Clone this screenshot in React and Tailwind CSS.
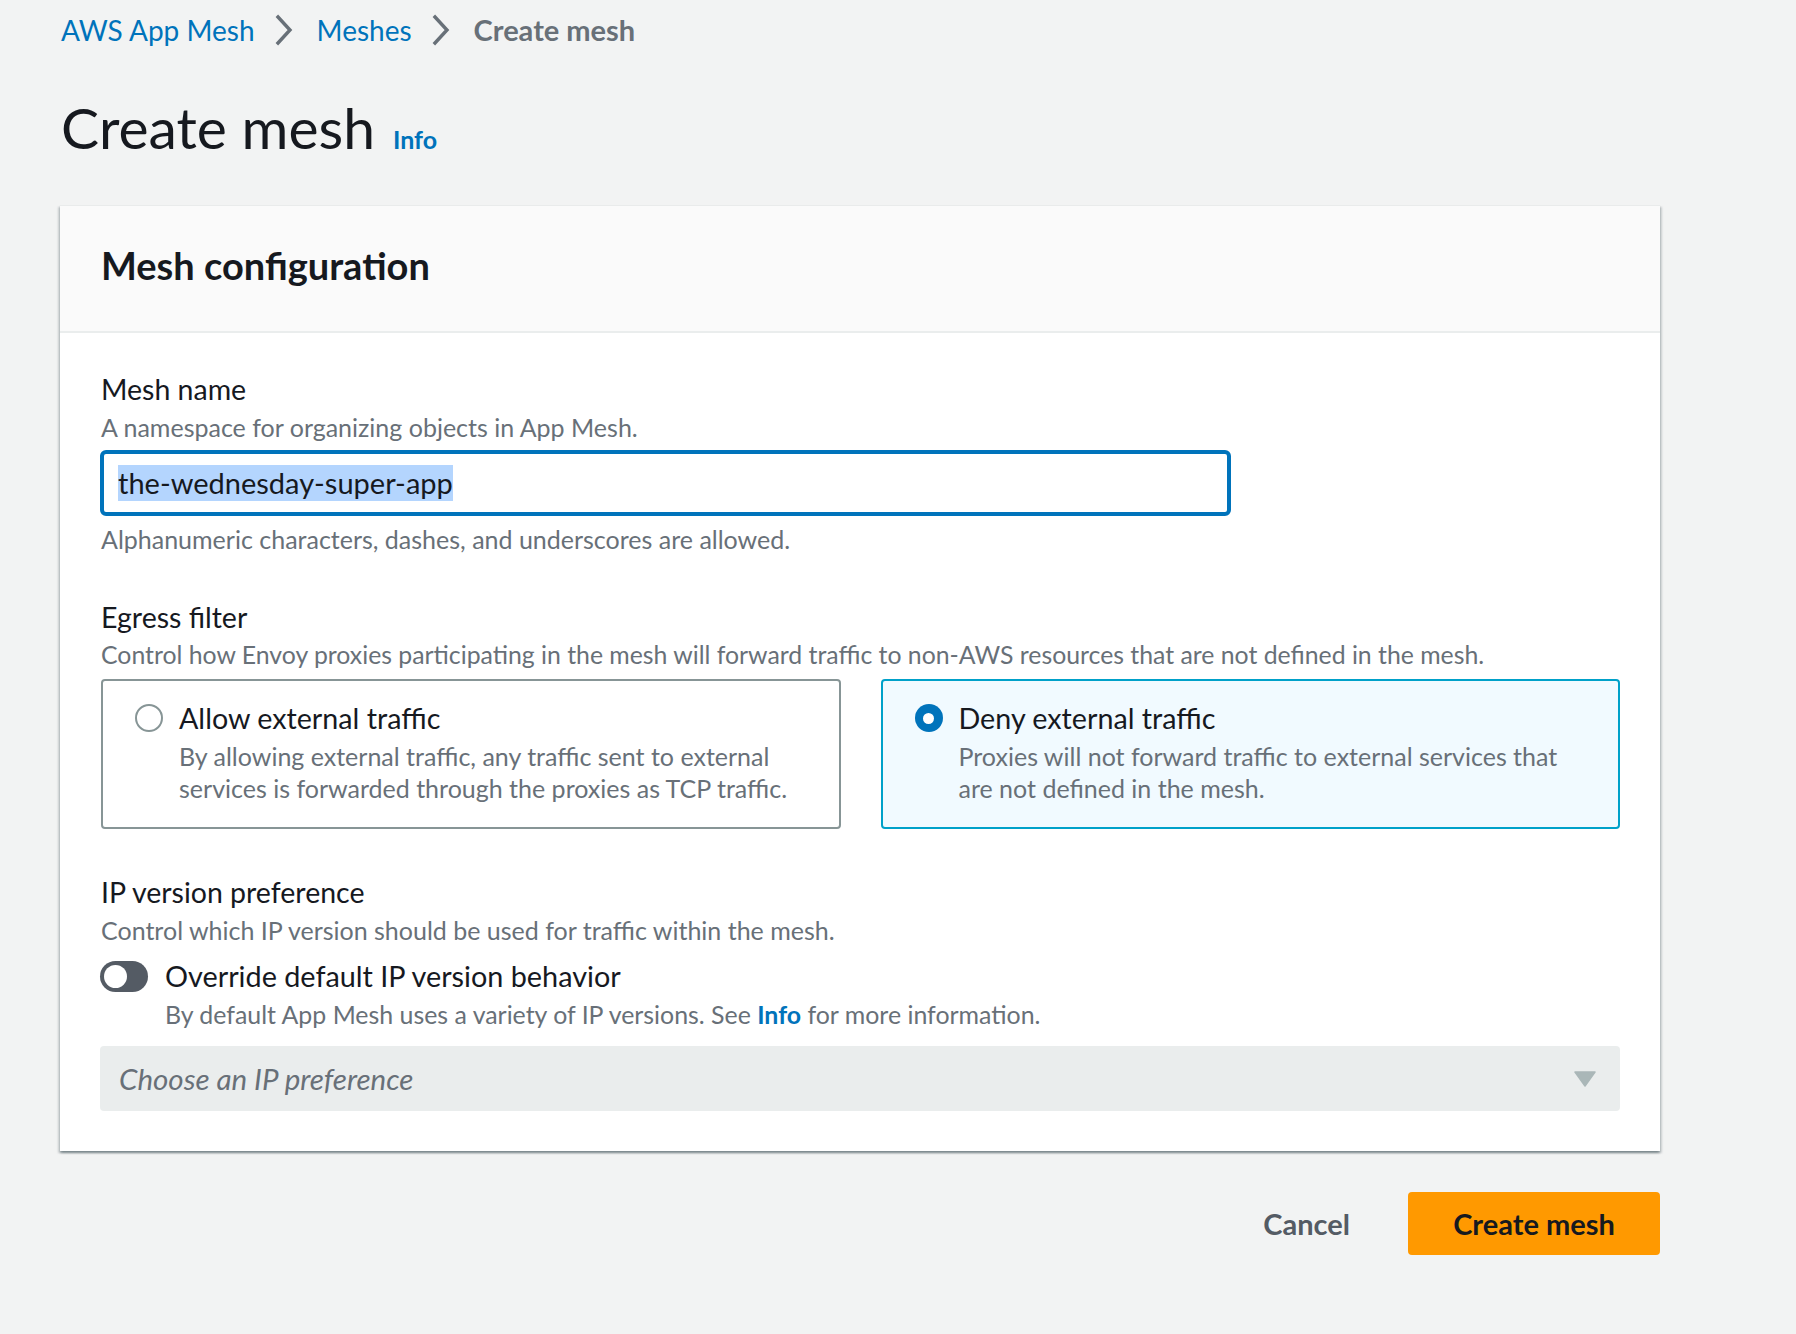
const Chevron = () => (
  <svg width="18" height="32" viewBox="0 0 18 32" className="ml-[20px] mr-[24px] shrink-0">
    <path d="M3 3 L15 16 L3 29" fill="none" stroke="#687078" strokeWidth="3.4" strokeLinecap="square" />
  </svg>
);

function RadioTile({ selected, title, lines }) {
  return (
    <div
      className={
        selected
          ? "w-[740px] h-[150px] rounded-[4px] border-2 border-[#00a1c9] bg-[#f1faff] pl-[32px] pt-[15px]"
          : "w-[740px] h-[150px] rounded-[4px] border-2 border-[#879596] bg-white pl-[32px] pt-[15px]"
      }
    >
      <div className="flex items-center h-[44px]">
        {selected ? (
          <div className="w-[28px] h-[28px] rounded-full bg-[#0073bb] flex items-center justify-center shrink-0">
            <div className="w-[11px] h-[11px] rounded-full bg-white" />
          </div>
        ) : (
          <div className="w-[28px] h-[28px] rounded-full border-2 border-[#879596] bg-white shrink-0" />
        )}
        <span className="ml-[16px] text-[28.7px] leading-[44px] text-[#16191f]">{title}</span>
      </div>
      <div className="pl-[44px] text-[25px] leading-[32px] text-[#687078]">
        {lines.map((l) => (
          <div key={l}>{l}</div>
        ))}
      </div>
    </div>
  );
}

export default function App() {
  return (
    <div className="min-h-[1334px] w-[1796px] bg-[#f2f3f3] font-[Lato,sans-serif] text-[#16191f]">
      <div className="pl-[61px] pt-[8px]">
        <nav className="flex items-center h-[44px] text-[28px] leading-[44px]">
          <span className="text-[#0073bb]">AWS App Mesh</span>
          <Chevron />
          <span className="text-[#0073bb]">Meshes</span>
          <Chevron />
          <span className="font-bold text-[29px] text-[#687078]">Create mesh</span>
        </nav>
        <div className="mt-[39px] flex items-baseline">
          <h1 className="text-[57px] leading-[72px] text-[#16191f]">Create mesh</h1>
          <span className="ml-[18px] text-[25px] font-bold text-[#0073bb]">Info</span>
        </div>
      </div>

      <div className="ml-[60px] mt-[42px] w-[1600px] bg-white border-t border-[#e9ebeb] shadow-[0_2px_2px_0_rgba(0,28,36,0.3),2px_2px_2px_0_rgba(0,28,36,0.15),-2px_2px_2px_0_rgba(0,28,36,0.15)]">
        <div className="h-[127px] bg-[#fafafa] border-b-2 border-[#eaeded] px-[41px] pb-[7px] flex items-center">
          <h2 className="text-[38px] font-bold leading-[44px] text-[#16191f]">Mesh configuration</h2>
        </div>

        <div className="px-[40px] pt-[34px] pb-[40px]">
          <div className="pl-[1px] text-[28.5px] leading-[44px]">Mesh name</div>
          <div className="pl-[1px] text-[25px] leading-[32px] text-[#687078]">A namespace for organizing objects in App Mesh.</div>
          <div className="mt-[7px] w-[1131px] h-[66px] border-4 border-[#0073bb] rounded-[6px] bg-white px-[14px] flex items-center">
            <span className="bg-[#b4d5fe] text-[29px] leading-[36px] text-[#16191f]">the-wednesday-super-app</span>
          </div>
          <div className="mt-[7px] pl-[1px] text-[25px] leading-[32px] text-[#687078]">
            Alphanumeric characters, dashes, and underscores are allowed.
          </div>

          <div className="mt-[40px] pl-[1px] text-[28.5px] leading-[44px]">Egress filter</div>
          <div className="pl-[1px] text-[24.8px] leading-[32px] text-[#687078]">
            Control how Envoy proxies participating in the mesh will forward traffic to non-AWS resources that are not defined in the mesh.
          </div>
          <div className="mt-[8px] flex gap-[40px] pl-[1px]">
            <RadioTile
              title="Allow external traffic"
              lines={[
                "By allowing external traffic, any traffic sent to external",
                "services is forwarded through the proxies as TCP traffic.",
              ]}
            />
            <RadioTile
              selected
              title="Deny external traffic"
              lines={[
                "Proxies will not forward traffic to external services that",
                "are not defined in the mesh.",
              ]}
            />
          </div>

          <div className="mt-[41px] pl-[1px] text-[28.5px] leading-[44px]">IP version preference</div>
          <div className="pl-[1px] text-[25px] leading-[32px] text-[#687078]">
            Control which IP version should be used for traffic within the mesh.
          </div>
          <div className="mt-[8px] flex items-center h-[44px]">
            <div className="w-[48px] h-[31px] rounded-full bg-[#545b64] flex items-center pl-[4px] shrink-0">
              <div className="w-[23px] h-[23px] rounded-full bg-white" />
            </div>
            <span className="ml-[17px] text-[28.8px] leading-[44px]">Override default IP version behavior</span>
          </div>
          <div className="pl-[65px] text-[24.9px] leading-[32px] text-[#687078]">
            By default App Mesh uses a variety of IP versions. See{" "}
            <span className="font-bold text-[#0073bb]">Info</span> for more information.
          </div>
          <div className="mt-[16px] w-[1520px] h-[65px] rounded-[4px] bg-[#eaeded] pl-[19px] pr-[24px] flex items-center justify-between">
            <span className="italic text-[29.5px] leading-[44px] text-[#687078]">Choose an IP preference</span>
            <svg width="22" height="16" viewBox="0 0 22 16">
              <path d="M1 1 H21 L11 15 Z" fill="#aab7b8" stroke="#aab7b8" strokeWidth="1.5" strokeLinejoin="round" />
            </svg>
          </div>
        </div>
      </div>

      <div className="w-[1660px] mt-[41px] flex justify-end items-center">
        <button className="h-[63px] px-[40px] text-[29px] font-bold text-[#545b64]">Cancel</button>
        <button className="ml-[18px] h-[63px] w-[252px] rounded-[4px] bg-[#ff9900] text-[29px] font-bold text-[#16191f]">
          Create mesh
        </button>
      </div>
    </div>
  );
}
